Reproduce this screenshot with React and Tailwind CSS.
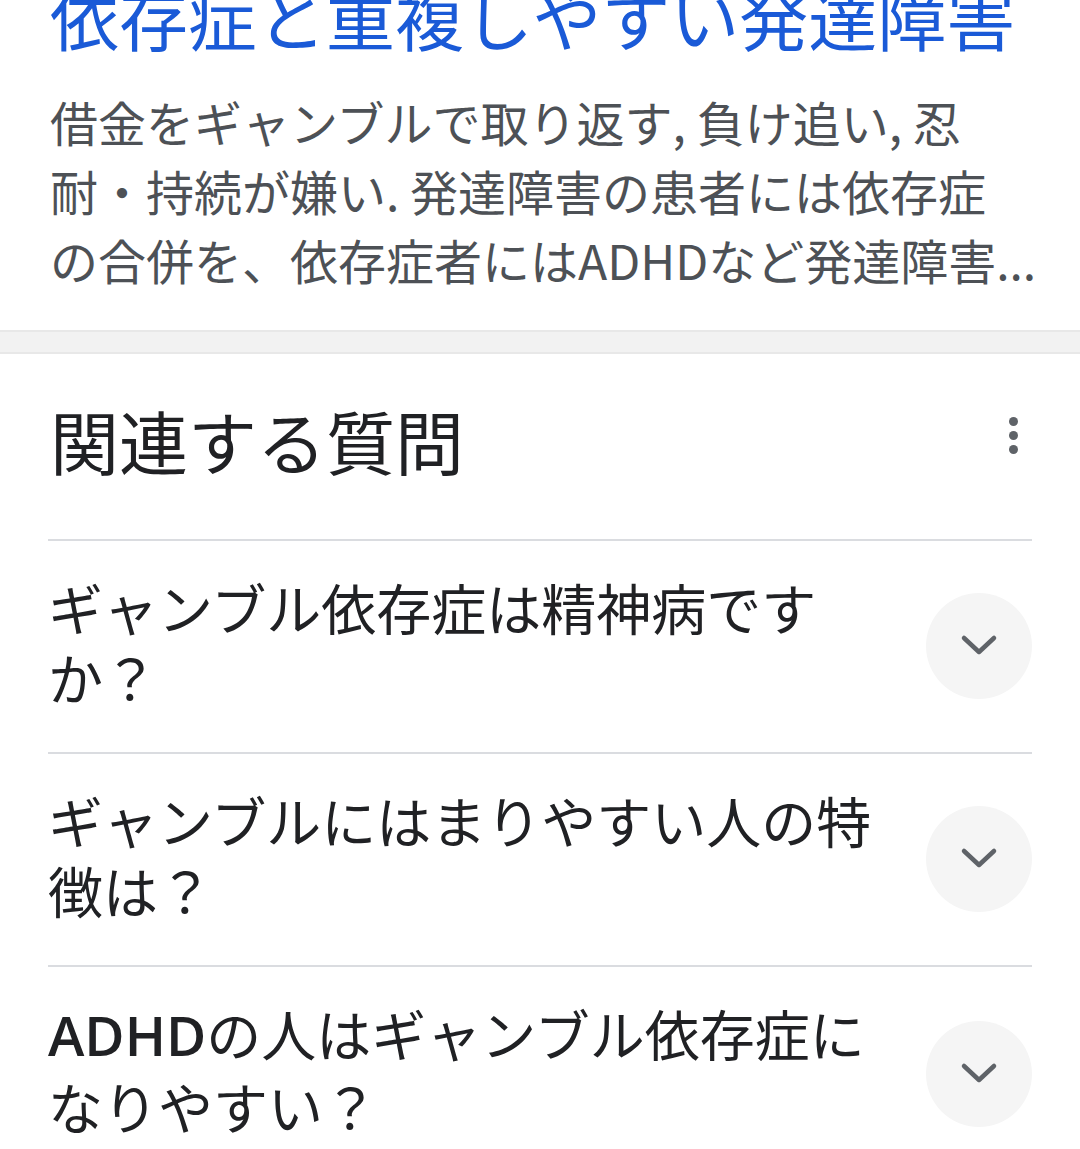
import React from "react";

const font = { fontFamily: '"Noto Sans CJK JP", "Noto Sans", sans-serif' };

function Chevron() {
  return (
    <svg width="40" height="40" viewBox="0 0 40 40" fill="none">
      <path d="M5 12 L20 26 L35 12" stroke="#5f6368" strokeWidth="4.5" strokeLinecap="round" strokeLinejoin="round" />
    </svg>
  );
}

function Question({ lines }) {
  return (
    <div className="border-t-2 border-[#dadce0] flex items-center justify-between pt-[30px] pb-[41px]">
      <div className="text-[55px] leading-[70px] text-[#202124]">
        {lines.map((l, i) => (
          <div key={i} className="whitespace-nowrap">{l}</div>
        ))}
      </div>
      <div className="mt-[10px] w-[106px] h-[106px] rounded-full bg-[#f5f5f5] flex items-center justify-center shrink-0">
        <Chevron />
      </div>
    </div>
  );
}

export default function App() {
  return (
    <div className="w-[1080px] h-[1149px] overflow-hidden bg-white" style={font}>
      <div className="px-[50px]">
        <div className="mt-[-24px] text-[69px] leading-[80px] text-[#1a5ad7] whitespace-nowrap">
          依存症と重複しやすい発達障害
        </div>
        <div className="mt-[31px] text-[48px] leading-[69px] text-[#4d5156]">
          <div className="whitespace-nowrap">借金をギャンブルで取り返す, 負け追い, 忍</div>
          <div className="whitespace-nowrap">耐・持続が嫌い. 発達障害の患者には依存症</div>
          <div className="whitespace-nowrap">の合併を、依存症者にはADHDなど発達障害...</div>
        </div>
      </div>
      <div className="mt-[36px] h-[24px] bg-[#f2f2f2] border-y-2 border-[#e8e8e8]" />
      <div className="px-[48px]">
        <div className="flex items-start justify-between pt-[46px] pb-[59px]">
          <div className="pl-[2px] text-[69px] leading-[80px] text-[#202124]">関連する質問</div>
          <div className="flex flex-col gap-[5px] pt-[17px] pr-[14px]">
            <div className="w-[9px] h-[9px] rounded-full bg-[#5f6368]" />
            <div className="w-[9px] h-[9px] rounded-full bg-[#5f6368]" />
            <div className="w-[9px] h-[9px] rounded-full bg-[#5f6368]" />
          </div>
        </div>
        <div>
          <Question lines={["ギャンブル依存症は精神病です", "か？"]} />
          <Question lines={["ギャンブルにはまりやすい人の特", "徴は？"]} />
          <Question
            lines={[
              <>
                <span className="font-semibold" style={{ fontFamily: '"Open Sans", "Noto Sans", sans-serif' }}>ADHD</span>
                の人はギャンブル依存症に
              </>,
              "なりやすい？",
            ]}
          />
        </div>
      </div>
    </div>
  );
}
